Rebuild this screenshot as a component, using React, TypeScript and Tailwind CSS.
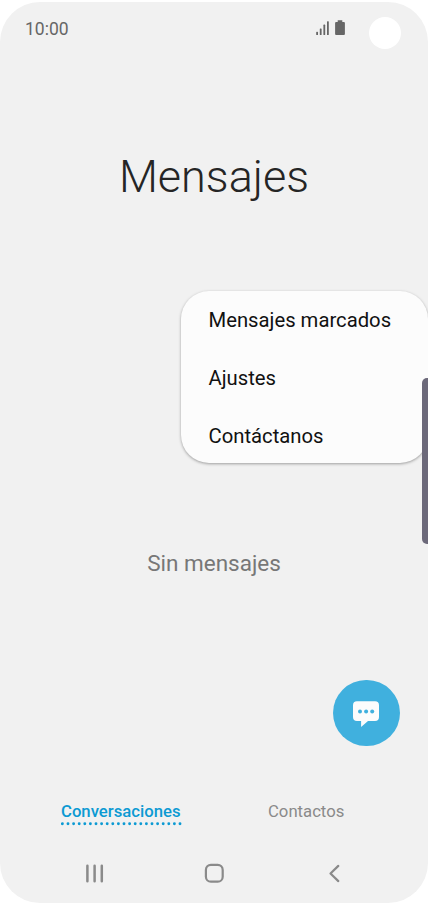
import { useState } from 'react'

const MENU_ITEMS = ['Mensajes marcados', 'Ajustes', 'Contáctanos']

type Tab = 'conversations' | 'contacts'

function StatusBar() {
  return (
    <header className="flex h-[62px] shrink-0 items-start justify-between pl-[25px] pr-[27px] text-[#666666]">
      <span className="mt-[16px] text-[17.5px] leading-[22px]">10:00</span>
      <div className="flex items-start">
        <svg className="mt-[19px]" width="13" height="14" viewBox="0 0 13 14" fill="currentColor">
          <rect x="0.2" y="10.8" width="1.8" height="3.2" rx="0.6" />
          <rect x="3.8" y="7.4" width="1.8" height="6.6" rx="0.6" />
          <rect x="7.4" y="3.6" width="1.8" height="10.4" rx="0.6" />
          <rect x="11" y="0.2" width="1.8" height="13.8" rx="0.6" />
        </svg>
        <svg className="ml-[6px] mt-[18px]" width="10" height="15" viewBox="0 0 10 15" fill="currentColor">
          <path d="M2.7 0.3h4.6v1.6h1.6a1 1 0 0 1 1 1v11a1 1 0 0 1-1 1H1.1a1 1 0 0 1-1-1v-11a1 1 0 0 1 1-1h1.6z" />
        </svg>
        {/* Camera cutout */}
        <div className="ml-[24px] mt-[15px] size-8 rounded-full bg-white" />
      </div>
    </header>
  )
}

function OverflowMenu() {
  return (
    <div className="absolute left-[180.5px] top-[288.5px] h-[172px] w-[247px] rounded-[28px] bg-[#fcfcfc] pt-[1px] shadow-[0_1px_3px_rgba(0,0,0,0.35)]">
      {MENU_ITEMS.map((item) => (
        <button
          key={item}
          className="flex h-[58px] w-full items-center whitespace-nowrap pl-[28px] text-left text-[20.25px] text-[#111111]"
        >
          {item}
        </button>
      ))}
    </div>
  )
}

function ComposeButton() {
  return (
    <button className="absolute left-[333px] top-[677.5px] flex size-[66.5px] items-center justify-center rounded-full bg-[#40b0de]">
      <svg className="mt-[2px]" width="26" height="26" viewBox="0 0 26 26">
        <path
          d="M4 0.3h18a4 4 0 0 1 4 4V16a4 4 0 0 1-4 4h-7l-6.9 6V20H4a4 4 0 0 1-4-4V4.300a4 4 0 0 1 4-4z"
          fill="#fcfcfc"
        />
        <g fill="#40b0de">
          <circle cx="7" cy="10.5" r="2" />
          <circle cx="13.1" cy="10.5" r="2" />
          <circle cx="19.2" cy="10.5" r="2" />
        </g>
      </svg>
    </button>
  )
}

function DottedLine() {
  return (
    <svg width="121" height="4" viewBox="0 0 121 4">
      <path d="M1.4 1.8H119.6" stroke="#0c9ad3" strokeWidth="2.9" strokeLinecap="round" strokeDasharray="0 5.6" />
    </svg>
  )
}

function NavBar() {
  return (
    <nav className="flex h-[60px] shrink-0 items-start text-[#8a8a8a]">
      <svg className="ml-[85px] mt-[21px]" width="19" height="19" viewBox="0 0 19 19" stroke="currentColor" strokeWidth="2.5" strokeLinecap="round">
        <path d="M2.4 1.7v15.6M9.6 1.7v15.6M16.8 1.7v15.6" />
      </svg>
      <svg className="ml-[100px] mt-[20px]" width="21" height="21" viewBox="0 0 21 21" fill="none" stroke="currentColor" strokeWidth="2.2">
        <rect x="1.9" y="1.9" width="16.8" height="16.8" rx="5" />
      </svg>
      <svg className="ml-[103px] mt-[21px]" width="13" height="19" viewBox="0 0 13 19" fill="none" stroke="currentColor" strokeWidth="2.2" strokeLinecap="round" strokeLinejoin="round">
        <path d="M10.3 1.9L2.5 9.5l7.8 7.6" />
      </svg>
    </nav>
  )
}

export default function App() {
  const [tab, setTab] = useState<Tab>('conversations')

  return (
    <div className="h-[903px] w-[428px] overflow-hidden bg-white pt-[2px] font-['Roboto',sans-serif]">
      <div className="relative flex h-[901px] flex-col overflow-hidden rounded-[40px] bg-[#f1f1f1]">
        <StatusBar />

        <h1 className="mt-[85px] text-center text-[45px] font-light leading-[56px] text-[#252525]">Mensajes</h1>

        <main className="flex grow flex-col items-center pt-[344px]">
          <p className="text-[22.5px] leading-[28px] text-[#777777]">Sin mensajes</p>
        </main>

        <div className="flex h-[41px] shrink-0 items-start text-[16.7px] leading-[20px]">
          <button onClick={() => setTab('conversations')} className="ml-[61px] w-[121px] text-left font-medium text-[#0c9ad3]">
            Conversaciones
            {tab === 'conversations' && <DottedLine />}
          </button>
          <button onClick={() => setTab('contacts')} className="ml-[86px] text-[#8a8a8a]">
            Contactos
            {tab === 'contacts' && <DottedLine />}
          </button>
        </div>

        <NavBar />

        <OverflowMenu />
        <ComposeButton />

        {/* Edge panel handle */}
        <div className="absolute left-[422px] top-[376px] h-[166px] w-[6px] rounded-l-[5px] bg-[#6c697a]" />
      </div>
    </div>
  )
}
